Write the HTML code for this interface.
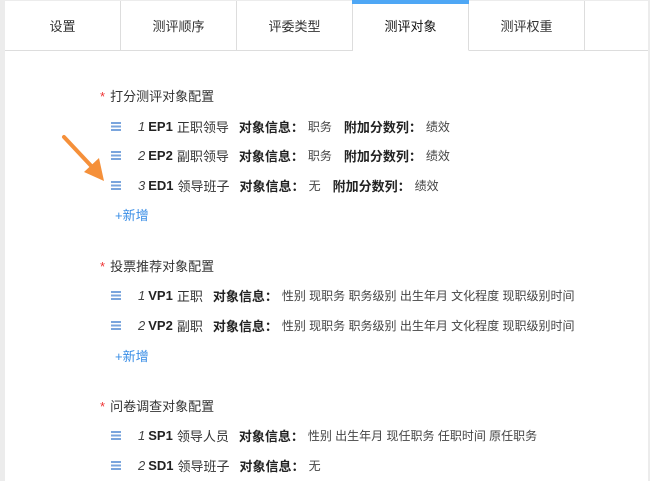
<!DOCTYPE html>
<html><head><meta charset="utf-8"><style>
body{margin:0;width:650px;height:475px;background:#ececec;overflow:hidden;font-family:"Liberation Sans","Noto Sans CJK SC",sans-serif;color:#333;position:relative}
.main{position:absolute;left:5px;top:1px;width:643px;height:480px;background:#fff}
.tabs{position:absolute;left:5px;top:1px;height:49px;width:643px;border-bottom:1px solid #ddd;display:flex}
.tab{width:116px;border-right:1px solid #ddd;text-align:center;line-height:52px;font-size:13px;color:#333;box-sizing:border-box;position:relative}
.tab.act{background:#fff;color:#111;border-bottom:1px solid #fff;height:50px}
.tab.act:before{content:"";position:absolute;left:-1px;right:-1px;top:-1px;height:4px;background:#4ea7f5}
.h{position:absolute;left:100px;font-size:13px;color:#333}
.h b{color:#e33;font-weight:normal;margin-right:5px}
.r{position:absolute;left:111px;font-size:13px;white-space:nowrap;display:flex;align-items:center;color:#333}
.ic{width:10px;height:9px;margin-right:17px;background:linear-gradient(#7aa5dd 0 2px,transparent 2px 3.5px,#7aa5dd 3.5px 5.5px,transparent 5.5px 7px,#7aa5dd 7px 9px)}
.n{font-style:italic;margin-right:3px;color:#444}
.c{font-weight:bold;margin-right:4px;color:#222}
.k{font-weight:bold;margin:0 4px 0 10px;color:#222}
.v{font-size:12px;color:#444}
.add{position:absolute;left:115px;font-size:13px;color:#3a8ee6}
</style></head><body>
<div class="main"></div>
<div class="tabs">
<div class="tab">设置</div><div class="tab">测评顺序</div><div class="tab">评委类型</div><div class="tab act">测评对象</div><div class="tab">测评权重</div><div class="tab" style="flex:1;border-right:none"></div>
</div>

<div class="h" style="top:86px"><b>*</b>打分测评对象配置</div>
<div class="r" style="top:117px"><span class="ic"></span><span class="n">1</span><span class="c">EP1</span>正职领导<span class="k">对象信息：</span><span class="v">职务</span><span class="k" style="margin-left:12px">附加分数列：</span><span class="v">绩效</span></div>
<div class="r" style="top:146px"><span class="ic"></span><span class="n">2</span><span class="c">EP2</span>副职领导<span class="k">对象信息：</span><span class="v">职务</span><span class="k" style="margin-left:12px">附加分数列：</span><span class="v">绩效</span></div>
<div class="r" style="top:176px"><span class="ic"></span><span class="n">3</span><span class="c">ED1</span>领导班子<span class="k">对象信息：</span><span class="v">无</span><span class="k" style="margin-left:12px">附加分数列：</span><span class="v">绩效</span></div>
<div class="add" style="top:205px">+新增</div>

<div class="h" style="top:256px"><b>*</b>投票推荐对象配置</div>
<div class="r" style="top:286px"><span class="ic"></span><span class="n">1</span><span class="c">VP1</span>正职<span class="k">对象信息：</span><span class="v">性别 现职务 职务级别 出生年月 文化程度 现职级别时间</span></div>
<div class="r" style="top:316px"><span class="ic"></span><span class="n">2</span><span class="c">VP2</span>副职<span class="k">对象信息：</span><span class="v">性别 现职务 职务级别 出生年月 文化程度 现职级别时间</span></div>
<div class="add" style="top:346px">+新增</div>

<div class="h" style="top:396px"><b>*</b>问卷调查对象配置</div>
<div class="r" style="top:426px"><span class="ic"></span><span class="n">1</span><span class="c">SP1</span>领导人员<span class="k">对象信息：</span><span class="v">性别 出生年月 现任职务 任职时间 原任职务</span></div>
<div class="r" style="top:456px"><span class="ic"></span><span class="n">2</span><span class="c">SD1</span>领导班子<span class="k">对象信息：</span><span class="v">无</span></div>

<svg style="position:absolute;left:0;top:0" width="650" height="475">
<line x1="64" y1="137" x2="95" y2="170" stroke="#f5903a" stroke-width="4" stroke-linecap="round"/>
<polygon points="104,181 84,172 99,158" fill="#f5903a"/>
</svg>
</body></html>
